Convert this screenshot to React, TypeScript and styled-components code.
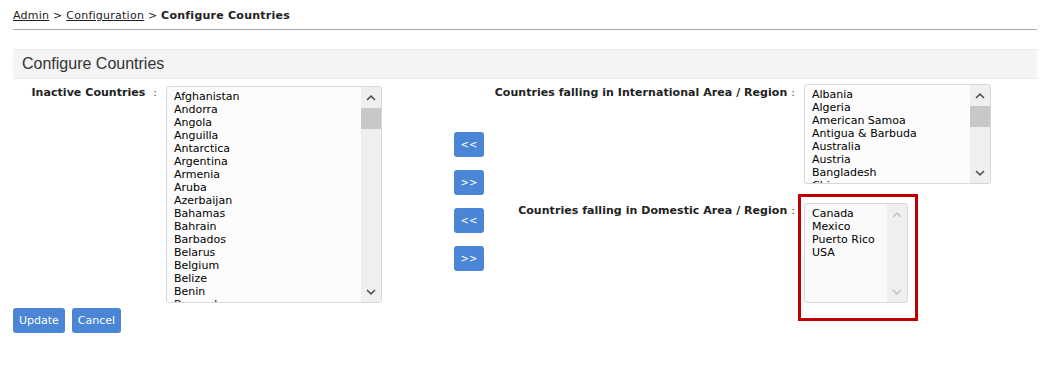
import React from 'react'
import styled, { createGlobalStyle } from 'styled-components'

const inactiveCountries = [
  'Afghanistan',
  'Andorra',
  'Angola',
  'Anguilla',
  'Antarctica',
  'Argentina',
  'Armenia',
  'Aruba',
  'Azerbaijan',
  'Bahamas',
  'Bahrain',
  'Barbados',
  'Belarus',
  'Belgium',
  'Belize',
  'Benin',
  'Bermuda',
  'Bhutan',
  'Bolivia',
]

const internationalCountries = [
  'Albania',
  'Algeria',
  'American Samoa',
  'Antigua & Barbuda',
  'Australia',
  'Austria',
  'Bangladesh',
  'China',
  'France',
]

const domesticCountries = ['Canada', 'Mexico', 'Puerto Rico', 'USA']

type ChevronProps = {
  dir: 'up' | 'down'
  color: string
}

const Chevron: React.FC<ChevronProps> = ({ dir, color }) => (
  <svg width="10" height="6" viewBox="0 0 10 6">
    <polyline
      points={dir === 'up' ? '1,5 5,1.2 9,5' : '1,1 5,4.8 9,1'}
      fill="none"
      stroke={color}
      strokeWidth="1.6"
    />
  </svg>
)

type ListBoxProps = {
  items: string[]
  width: number
  height: number
  disabled?: boolean
}

const ListBox: React.FC<ListBoxProps> = ({ items, width, height, disabled }) => (
  <Box $width={width} $height={height} $disabled={disabled}>
    <Options>
      {items.map((item) => (
        <Option key={item}>{item}</Option>
      ))}
    </Options>
    <ScrollTrack>
      <ScrollArrow>
        <Chevron dir="up" color={disabled ? '#c4c4c4' : '#505050'} />
      </ScrollArrow>
      {!disabled && <Thumb />}
      <TrackSpace />
      <ScrollArrow>
        <Chevron dir="down" color={disabled ? '#c4c4c4' : '#505050'} />
      </ScrollArrow>
    </ScrollTrack>
  </Box>
)

const App: React.FC = () => (
  <>
    <GlobalStyle />
    <Page>
      <Breadcrumb>
        <Crumb href="#">Admin</Crumb> &gt; <Crumb href="#">Configuration</Crumb>{' '}
        &gt; <Current>Configure Countries</Current>
      </Breadcrumb>

      <SectionTitle>Configure Countries</SectionTitle>

      <MainRow>
        <FieldLabel $width={153} $top={7}>
          Inactive Countries&nbsp;&nbsp;<Colon>:</Colon>
        </FieldLabel>
        <ListSlot $top={7}>
          <ListBox items={inactiveCountries} width={216} height={217} />
        </ListSlot>

        <MoveColumn>
          <MoveButton>&lt;&lt;</MoveButton>
          <MoveButton>&gt;&gt;</MoveButton>
          <MoveButton>&lt;&lt;</MoveButton>
          <MoveButton>&gt;&gt;</MoveButton>
        </MoveColumn>

        <RightSection>
          <RegionRow>
            <FieldLabel $width={313} $top={7}>
              Countries falling in International Area / Region <Colon>:</Colon>
            </FieldLabel>
            <ListSlot $top={5}>
              <ListBox items={internationalCountries} width={187} height={100} />
            </ListSlot>
          </RegionRow>

          <RegionRow $gap={19}>
            <FieldLabel $width={313} $top={1}>
              Countries falling in Domestic Area / Region <Colon>:</Colon>
            </FieldLabel>
            <Highlighted>
              <ListBox items={domesticCountries} width={104} height={100} disabled />
            </Highlighted>
          </RegionRow>
        </RightSection>
      </MainRow>

      <Actions>
        <ActionButton>Update</ActionButton>
        <ActionButton>Cancel</ActionButton>
      </Actions>
    </Page>
  </>
)

const GlobalStyle = createGlobalStyle`
  body {
    margin: 0;
    background: #ffffff;
    font-family: "DejaVu Sans", Verdana, sans-serif;
  }
`

const Page = styled.div`
  width: 1024px;
  padding: 0 25px 0 13px;
`

const Breadcrumb = styled.div`
  padding: 9px 0 6px;
  font-size: 11px;
  line-height: 14px;
  letter-spacing: 0.25px;
  color: #222;
  border-bottom: 1px solid #a9a9a9;
`

const Crumb = styled.a`
  color: #222;
  text-decoration: underline;
`

const Current = styled.span`
  font-weight: bold;
`

const SectionTitle = styled.div`
  margin-top: 19px;
  height: 28px;
  padding-left: 9px;
  background: #f4f4f4;
  border-top: 1px solid #ececec;
  border-bottom: 1px solid #ececec;
  font-family: "Liberation Sans", Arial, sans-serif;
  font-size: 16px;
  line-height: 28px;
  color: #333;
`

const MainRow = styled.div`
  display: flex;
  align-items: flex-start;
`

const FieldLabel = styled.div<{ $width: number; $top: number }>`
  width: ${({ $width }) => $width}px;
  margin-top: ${({ $top }) => $top}px;
  padding-right: 9px;
  box-sizing: border-box;
  text-align: right;
  font-size: 11px;
  font-weight: bold;
  line-height: 13px;
  letter-spacing: 0.05px;
  color: #222;
  white-space: nowrap;
`

const Colon = styled.span`
  font-weight: normal;
  color: #444;
`

const ListSlot = styled.div<{ $top: number }>`
  margin-top: ${({ $top }) => $top}px;
`

const Box = styled.div<{ $width: number; $height: number; $disabled?: boolean }>`
  display: flex;
  width: ${({ $width }) => $width}px;
  height: ${({ $height }) => $height}px;
  box-sizing: border-box;
  border: 1px solid #d8d8d8;
  border-radius: 3px;
  background: ${({ $disabled }) => ($disabled ? '#fafafa' : '#fcfcfc')};
  overflow: hidden;
`

const Options = styled.div`
  flex: 1;
  padding: 3px 0 0 7px;
  overflow: hidden;
  white-space: nowrap;
`

const Option = styled.div`
  font-size: 11px;
  line-height: 13px;
  color: #000;
`

const ScrollTrack = styled.div`
  display: flex;
  flex-direction: column;
  width: 20px;
  background: #efefef;
`

const ScrollArrow = styled.div`
  display: flex;
  align-items: center;
  justify-content: center;
  height: 21px;
`

const Thumb = styled.div`
  height: 21px;
  background: #c8c8c8;
`

const TrackSpace = styled.div`
  flex: 1;
`

const MoveColumn = styled.div`
  display: flex;
  flex-direction: column;
  gap: 13px;
  width: 109px;
  box-sizing: border-box;
  padding: 53px 0 0 72px;
`

const MoveButton = styled.button`
  width: 30px;
  height: 25px;
  padding: 0;
  border: none;
  border-radius: 3px;
  background: #4a85d6;
  color: #fff;
  font-family: "DejaVu Sans", Verdana, sans-serif;
  font-size: 10px;
  line-height: 25px;
`

const RightSection = styled.div`
  display: flex;
  flex-direction: column;
`

const RegionRow = styled.div<{ $gap?: number }>`
  display: flex;
  align-items: flex-start;
  margin-top: ${({ $gap }) => $gap ?? 0}px;
`

const Highlighted = styled.div`
  position: relative;

  &::after {
    content: '';
    position: absolute;
    top: -9px;
    left: -6px;
    right: -10px;
    bottom: -18px;
    border: 3px solid #c00000;
  }
`

const Actions = styled.div`
  display: flex;
  gap: 7px;
  margin-top: 5px;
`

const ActionButton = styled.button`
  height: 25px;
  padding: 0 6px;
  border: none;
  border-radius: 3px;
  background: #4a85d6;
  color: #fff;
  font-family: "DejaVu Sans", Verdana, sans-serif;
  font-size: 11px;
  line-height: 25px;
`

export default App
